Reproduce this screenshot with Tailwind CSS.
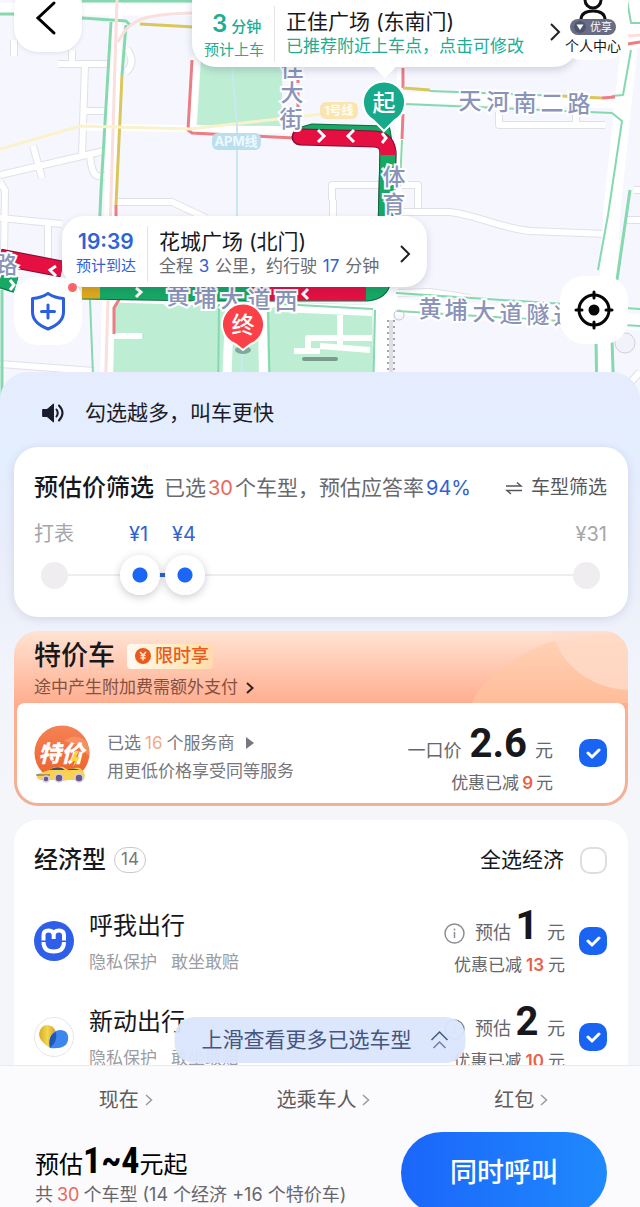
<!DOCTYPE html>
<html lang="zh-CN">
<head>
<meta charset="utf-8">
<meta name="viewport" content="width=device-width, initial-scale=1">
<title>同时呼叫</title>
<script src="https://cdn.jsdelivr.net/npm/@tailwindcss/browser@4"></script>
</head>
<body class="bg-[#f3f5f9] font-['Inter','Noto_Sans_CJK_SC',sans-serif] text-[#17181c]">
<div class="flex h-screen flex-col overflow-hidden">

  <!-- Map -->
  <section class="relative h-[400px] shrink-0 overflow-hidden bg-[#f6f7fe]" aria-label="地图">
    <svg class="absolute inset-0 h-full w-full" viewBox="0 0 640 400" preserveAspectRatio="xMidYMid slice" fill="none">
      <!-- parks -->
      <path d="M201 60H283L281 128L197 125Z" fill="#bdeed3"/>
      <path d="M113 303L125 296L372 305L374 400H113Z" fill="#bdeed3"/>
      <!-- minor roads: outline, then fill -->
      <g stroke="#e0e0e8" stroke-width="8" stroke-linejoin="round">
        <path d="M14 40V56M72 50V64M58 64H108M85 64L82 156M85 111H108M0 175L82 156L104 151M33 146L42 178M90 156C92 176 96 178 106 176M0 182L6 192"/>
        <path d="M127 49C133 58 133 66 126 72M118 202H172L206 218M0 218L62 224M5 190L4 258M48 224V262M0 364L94 371"/>
        <path d="M499 112V125H605M576 110V124M332 200V185H418V208M333 200V218M400 212H450C480 216 500 228 530 231L606 234M634 190H640M625 220H640"/>
        <path d="M395 293L430 292L470 298M630 383L640 372"/>
      </g>
      <g stroke="#fff" stroke-width="6" stroke-linejoin="round">
        <path d="M14 40V56M72 50V64M58 64H108M85 64L82 156M85 111H108M0 175L82 156L104 151M33 146L42 178M90 156C92 176 96 178 106 176M0 182L6 192"/>
        <path d="M127 49C133 58 133 66 126 72M118 202H172L206 218M0 218L62 224M5 190L4 258M48 224V262M0 364L94 371"/>
        <path d="M499 112V125H605M576 110V124M332 200V185H418V208M333 200V218M400 212H450C480 216 500 228 530 231L606 234M634 190H640M625 220H640"/>
        <path d="M395 293L430 292L470 298M630 383L640 372"/>
      </g>
      <!-- major roads -->
      <g stroke="#fff" stroke-linejoin="round">
        <path d="M0 9L220 10" stroke-width="12"/>
        <path d="M116 0L106 400" stroke-width="13"/>
        <path d="M400 97L620 103" stroke-width="11"/>
        <path d="M80 127L300 130" stroke-width="7"/>
        <path d="M634 0L612 210L602 400" stroke-width="17"/>
        <path d="M620 38H640" stroke-width="20"/>
        <path d="M385 306L640 322" stroke-width="16"/>
        <path d="M386 290L380 400" stroke-width="17"/>
        <path d="M402 60L393 300M196 55L191 130" stroke-width="9"/>
        <path d="M230 300L226 400M262 300L264 400" stroke-width="9"/>
        <path d="M113 336H142M294 351H320M308 350V338H372M340 315V346M320 346L370 350M280 309L372 313" stroke-width="6"/>
        <path d="M113 300L384 308" stroke-width="5"/>
      </g>
      <!-- traffic lines -->
      <g stroke="#86d9ae" stroke-width="3" stroke-linejoin="round">
        <path d="M0 14H14M82 1H200M82 18L126 21L130 25M111 22L101 190L98 260M126 25L122 75M2 290V400"/>
        <path d="M430 91L560 96M405 104L612 113L622 121L608 215L598 270M631 50L623 95L612 96M627 0L631 23H640" stroke-width="2"/>
        <path d="M402 140L400 186M396 293L640 309M397 311L640 326M375 310L373 400M279 304L373 309M219 304L218 400M268 304L270 400M90 300L94 400" stroke-width="2"/>
        <path d="M630 190L617 280M596 340L597 400M612 340L614 400" stroke-width="3"/>
      </g>
      <path d="M192 60L188 130L192 133L294 138M403 68V88M403 114L402 139M602 98L615 97M628 44L640 42M116 205V220M120 298L114 308V334" stroke="#ed7d84" stroke-width="3"/>
      <path d="M298 74V110" stroke="#ed7d84" stroke-width="3" stroke-dasharray="9 5"/>
      <path d="M122 75L116 205M140 24L194 27M403 88L430 90M560 96L602 98" stroke="#d9c75c" stroke-width="3"/>
      <path d="M117 0L116 30L105 400M118 42C130 20 140 14 194 13M628 36L640 35" stroke="#fbdfdc" stroke-width="3"/>
      <path d="M0 149L80 126L190 129L330 113" stroke="#faf2cb" stroke-width="3"/>
      <path d="M232 68L237 125V216M242 348L241 400" stroke="#c9e9f2" stroke-width="2"/>
      <path d="M388 320V400M394 320V400" stroke="#a3a4ac" stroke-width="2" stroke-dasharray="2 4"/>
      <path d="M391 320V400" stroke="#dedfe4" stroke-width="4"/>
      <circle cx="399" cy="315" r="5" stroke="#c3c5cd"/>
      <circle cx="625" cy="343" r="10" stroke="#cfd0da" fill="#f2f3fa"/>

      <!-- transit labels -->
      <rect x="212" y="133" width="49" height="17" rx="6" fill="#bcdfee"/>
      <text x="236" y="146" text-anchor="middle" font-size="13" font-weight="700" fill="#eef9ff">APM线</text>
      <rect x="320" y="102" width="38" height="17" rx="6" fill="#fae5b0"/>
      <text x="339" y="115" text-anchor="middle" font-size="12" font-weight="700" fill="#fffdf4">1号线</text>

      <!-- planned route -->
      <g stroke-linejoin="round">
        <path d="M298 132L312 128L386 130L388 142" stroke="#0b6b41" stroke-width="9" stroke-linecap="round"/>
        <path d="M298 132L312 128L386 130L388 142" stroke="#17a864" stroke-width="7" stroke-linecap="round"/>
        <path d="M300 137L375 139Q388 140 388 154L386 230" stroke="#7c0f35" stroke-width="17" stroke-linecap="round"/>
        <path d="M388 150L386 230" stroke="#0b6b41" stroke-width="17"/>
        <path d="M388 150L386 230" stroke="#17a864" stroke-width="15"/>
        <path d="M300 137L375 139Q388 140 388 155" stroke="#e50f41" stroke-width="15"/>
        <circle cx="300" cy="137" r="7" fill="#e50f41"/>
        <path d="M0 257L62 269" stroke="#7c0f35" stroke-width="17"/>
        <path d="M0 257L62 269" stroke="#e50f41" stroke-width="15"/>
        <path d="M0 280L16 285" stroke="#0b6b41" stroke-width="16"/>
        <path d="M0 280L16 285" stroke="#17a864" stroke-width="14"/>
        <path d="M82 291L200 293L366 293Q381 292 383 280" stroke="#0b6b41" stroke-width="17"/>
        <path d="M82 291L200 293L366 293Q381 292 383 280" stroke="#17a864" stroke-width="15"/>
        <path d="M82 291L100 291" stroke="#e0a91c" stroke-width="15"/>
        <path d="M250 293H366" stroke="#e50f41" stroke-width="15"/>
      </g>
      <path d="M318 130L324 136L318 142M354 130L348 136L354 142M382 133L386 138L382 143M56 266L50 270L56 276M10 280L14 285L10 290M136 288L141 292L136 297M308 289L303 294L308 299M382 168L387 173" stroke="#fff" stroke-width="3"/>

      <!-- road names -->
      <g font-size="23" fill="#8a94b8" stroke="#fff" stroke-width="4" paint-order="stroke" font-weight="500" text-anchor="middle">
        <text x="292" y="76">佳</text><text x="292" y="101">大</text><text x="291" y="127">街</text>
        <text x="394" y="185">体</text><text x="394" y="212">育</text>
        <text x="470" y="109">天</text><text x="498" y="110">河</text><text x="525" y="111">南</text><text x="552" y="111">二</text><text x="579" y="112">路</text>
        <text x="6" y="273">路</text>
        <text x="178" y="304">黄</text><text x="205" y="306">埔</text><text x="232" y="307">大</text><text x="259" y="308">道</text><text x="286" y="309">西</text>
        <text x="430" y="317">黄</text><text x="456" y="318">埔</text><text x="484" y="320">大</text><text x="511" y="322">道</text><text x="538" y="323">隧</text><text x="565" y="324">道</text>
      </g>

      <!-- start and end pins -->
      <path d="M384 131L374 121A21 21 0 1 1 394 121Z" fill="#16a98b" stroke="#fff" stroke-width="2"/>
      <text x="384" y="111" text-anchor="middle" font-size="23" font-weight="500" fill="#fff">起</text>
      <ellipse cx="243" cy="350" rx="8" ry="4" fill="#83a79a"/>
      <path d="M243 350L235 344A21 21 0 1 1 251 344Z" fill="#fa4148" stroke="#fff" stroke-width="2"/>
      <text x="243" y="333" text-anchor="middle" font-size="23" font-weight="500" fill="#fff">终</text>
    </svg>

    <!-- pick-up card -->
    <button type="button" class="absolute left-[192px] top-[-4px] flex h-[71px] w-[386px] items-center rounded-b-3xl bg-white pl-3 pt-1 text-left shadow-[0_3px_8px_rgba(40,50,90,0.2)]">
      <span class="w-[70px] text-[#20ad92]">
        <span class="flex items-baseline gap-1 pl-2 leading-6"><span class="text-2xl font-semibold">3</span><span class="text-[15px] font-medium">分钟</span></span>
        <span class="block text-[15px] leading-5">预计上车</span>
      </span>
      <span class="h-14 w-px bg-[#e3e3e8]"></span>
      <span class="ml-[11px]">
        <span class="block text-[21px] leading-6">正佳广场 (东南门)</span>
        <span class="block text-[17px] leading-6 text-[#20ad92]">已推荐附近上车点，点击可修改</span>
      </span>
    </button>
    <span class="absolute left-[373px] top-[66px] h-3 w-6 bg-white [clip-path:polygon(0_0,100%_0,50%_100%)]"></span>

    <button type="button" aria-label="返回" class="absolute left-[14px] top-[-16px] flex h-[68px] w-[68px] items-center justify-center rounded-3xl bg-white shadow-[0_1px_4px_rgba(40,50,90,0.12)]">
      <svg class="h-9 w-9" viewBox="0 0 36 36" fill="none" stroke="#000" stroke-width="3" stroke-linecap="round"><path d="M24 3L8 18L24 33"/></svg>
    </button>

    <button type="button" class="absolute right-[12px] top-[-8px] flex h-[68px] w-[70px] flex-col items-center justify-end rounded-b-3xl bg-white pb-1">
      <svg class="absolute top-0 h-9 w-[34px]" viewBox="0 0 34 36" fill="none" stroke="#0d0e12" stroke-width="3"><circle cx="17" cy="8" r="8"/><path d="M5 28Q5 19 17 19T29 28"/></svg>
      <span class="relative mb-px flex h-4 items-center gap-1 rounded-full bg-[#686c84] px-1 text-[11px] leading-none text-white">
        <svg class="h-3 w-3" viewBox="0 0 12 12"><circle cx="6" cy="6" r="6" fill="#4f5571"/><path d="M2.500 3.500H9.500L6 9Z" fill="#fff"/></svg>优享
      </span>
      <span class="text-[14px] leading-5">个人中心</span>
    </button>
    <svg class="absolute left-[549px] top-[22px] h-5 w-3" viewBox="0 0 12 20" fill="none" stroke="#222" stroke-width="2"><path d="M2 2L10 10L2 18"/></svg>

    <!-- destination card -->
    <button type="button" class="absolute left-[62px] top-[216px] flex h-[71px] w-[365px] items-center rounded-[22px] bg-white pl-[14px] pt-1 text-left shadow-[0_3px_8px_rgba(40,50,90,0.18)]">
      <span class="w-[71px] text-[#2f62d6]">
        <span class="block pl-0.5 text-[21px] font-semibold leading-6">19:39</span>
        <span class="block text-[15px] leading-6">预计到达</span>
      </span>
      <span class="h-14 w-px bg-[#e3e3e8]"></span>
      <span class="ml-[11px]">
        <span class="block text-[21px] leading-6">花城广场 (北门)</span>
        <span class="block text-[17px] leading-6 text-[#6a6c72]">全程 <span class="mx-px text-[#2f62d6]">3</span> 公里，约行驶 <span class="mx-px text-[#2f62d6]">17</span> 分钟</span>
      </span>
      <svg class="ml-auto mr-4 h-5 w-3" viewBox="0 0 12 20" fill="none" stroke="#222" stroke-width="2"><path d="M2 2L10 10L2 18"/></svg>
    </button>

    <button type="button" aria-label="安全中心" class="absolute left-[14px] top-[277px] flex h-[68px] w-[68px] items-center justify-center rounded-3xl bg-white">
      <svg class="h-10 w-9" viewBox="0 0 36 40" fill="none" stroke="#2c5fe0" stroke-width="3" stroke-linejoin="round" stroke-linecap="round"><path d="M18 2.500Q25 7 33.500 7.500V21Q33.500 32 18 38Q2.500 32 2.500 21V7.500Q11 7 18 2.500ZM18 14V27M11.500 20.500H24.500"/></svg>
    </button>
    <span class="absolute left-[68px] top-[283px] h-[9px] w-[9px] rounded-full bg-[#fa6566]"></span>
    <button type="button" aria-label="定位" class="absolute right-[12px] top-[276px] flex h-[68px] w-[68px] items-center justify-center rounded-3xl bg-white">
      <svg class="h-10 w-10" viewBox="0 0 40 40" fill="none" stroke="#050505" stroke-width="3" stroke-linecap="round"><circle cx="20" cy="20" r="15"/><circle cx="20" cy="20" r="5.500" fill="#050505" stroke="none"/><path d="M20 2V8M20 32V38M2 20H8M32 20H38"/></svg>
    </button>
    <span class="absolute left-1/2 top-[357px] h-1 w-9 -translate-x-1/2 rounded-full bg-[#3c4a44]/50"></span>
  </section>

  <!-- Sheet -->
  <main class="relative -mt-7 flex min-h-0 flex-1 flex-col gap-[14px] overflow-hidden rounded-t-[28px] bg-[linear-gradient(180deg,#e6ecfd_0px,#e3eefe_75px,#e9edfb_170px,#f1f4fa_300px,#f4f6fa_420px)] pl-[14px] pr-3">
    <div class="flex h-[61px] shrink-0 items-end gap-5 pl-[27px]">
      <svg class="mb-2 h-6 w-6" viewBox="0 0 24 24" fill="none" stroke="#1a1c2a" stroke-width="2" stroke-linecap="round"><path d="M2 8.500H6L12.500 3V21L6 15.500H2Z" fill="#1a1c2a" stroke-width="1" stroke-linejoin="round"/><path d="M15.500 8.500Q18 12 15.500 15.500M18 4.500Q25 12 18 19.500"/></svg>
      <p class="mb-1 text-[21px] leading-8 text-[#1a1c2a]">勾选越多，叫车更快</p>
    </div>

    <section class="shrink-0 rounded-3xl bg-white pb-[22px] pl-5 pr-[21px] pt-[25px] shadow-[0_2px_10px_rgba(90,100,150,0.18)]">
      <div class="flex h-8 items-center whitespace-nowrap">
        <h2 class="text-2xl font-medium leading-8">预估价筛选</h2>
        <p class="ml-[10px] text-[21px] leading-8 text-[#68696f]">已选<span class="mx-0.5 text-[20px] text-[#e8685a]">30</span>个车型，预估应答率<span class="ml-0.5 text-[20px] text-[#3262cf]">94%</span></p>
        <button type="button" class="ml-auto flex items-center gap-2 text-[19px] text-[#55565b]">
          <svg class="h-4 w-[18px]" viewBox="0 0 18 16" fill="none" stroke="#55565b" stroke-width="1.500"><path d="M1 6H16L12 2.500M17 10.500H2L6 14"/></svg>车型筛选
        </button>
      </div>
      <div class="mt-[18px] flex h-6 items-center text-[20px] text-[#a6a6aa]">
        <span class="w-[95px]">打表</span>
        <label for="price-min" class="w-[43px] text-[#3262cf]">¥1</label>
        <label for="price-max" class="text-[#3262cf]">¥4</label>
        <span class="ml-auto">¥31</span>
      </div>
      <div class="relative mt-[9px] flex h-10 items-center justify-between px-[7px]">
        <span class="h-[27px] w-[27px] rounded-full bg-[#efedef]"></span>
        <span class="h-0.5 flex-1 bg-[#efedef]"></span>
        <span class="h-[27px] w-[27px] rounded-full bg-[#efedef]"></span>
        <span class="absolute left-[105px] h-1 w-12 bg-[#2a62dc]"></span>
        <input id="price-min" type="range" min="0" max="100" step="0.1" value="16.2" class="pointer-events-none absolute inset-0 h-10 w-full appearance-none bg-transparent [&::-webkit-slider-thumb]:pointer-events-auto [&::-webkit-slider-thumb]:h-10 [&::-webkit-slider-thumb]:w-10 [&::-webkit-slider-thumb]:appearance-none [&::-webkit-slider-thumb]:rounded-full [&::-webkit-slider-thumb]:bg-[radial-gradient(circle,#1b66f5_7px,#fff_8px)] [&::-webkit-slider-thumb]:shadow-[0_2px_8px_rgba(60,60,80,0.28)]">
        <input id="price-max" type="range" min="0" max="100" step="0.1" value="24.5" class="pointer-events-none absolute inset-0 h-10 w-full appearance-none bg-transparent [&::-webkit-slider-thumb]:pointer-events-auto [&::-webkit-slider-thumb]:h-10 [&::-webkit-slider-thumb]:w-10 [&::-webkit-slider-thumb]:appearance-none [&::-webkit-slider-thumb]:rounded-full [&::-webkit-slider-thumb]:bg-[radial-gradient(circle,#1b66f5_7px,#fff_8px)] [&::-webkit-slider-thumb]:shadow-[0_2px_8px_rgba(60,60,80,0.28)]">
      </div>
    </section>

    <section class="relative shrink-0 overflow-hidden rounded-3xl bg-[linear-gradient(180deg,#ffe3d3_0px,#ffae90_72px,#f2b096_100%)]">
      <svg class="absolute right-0 top-0 h-[72px] w-[160px]" viewBox="0 0 160 72"><path d="M4 72C12 50 50 22 85 10L160 0V72Z" fill="#ffc9a2" fill-opacity=".55"/><path d="M84 0C92 35 125 58 160 59V0Z" fill="#ffdccb" fill-opacity=".75"/></svg>
      <div class="relative pb-[3px] pl-5 pt-[9px]">
        <div class="flex h-8 items-center gap-3">
          <h2 class="text-[27px] font-medium leading-8">特价车</h2>
          <span class="flex h-[25px] items-center gap-1 rounded bg-[linear-gradient(90deg,#fffaf2,#ffe4ae_80%,#ffd9b0)] pl-2 pr-1 text-[18px] font-medium leading-6 text-[#ea5a1e]">
            <svg class="h-4 w-4" viewBox="0 0 16 16"><circle cx="8" cy="8" r="8" fill="#ea5a1e"/><path d="M5 4L8 7L11 4M8 7V12.500M5.500 7.500H10.500M5.500 10H10.500" fill="none" stroke="#ffe9cf" stroke-width="1.500"/></svg>限时享
          </span>
        </div>
        <a href="#fees" class="mt-1 flex h-6 items-center gap-2 text-[17px] text-[#86503f]">途中产生附加费需额外支付
          <svg class="h-3 w-2" viewBox="0 0 8 12" fill="none" stroke="#33211c" stroke-width="2"><path d="M1 1L6.500 6L1 11"/></svg>
        </a>
      </div>
      <div class="relative mx-[3px] mb-[3px] flex h-[100px] items-center rounded-b-[21px] rounded-t-lg bg-white pl-[17px] pr-[18px]">
        <svg class="h-[60px] w-[56px]" viewBox="0 0 56 60">
          <defs><linearGradient id="deal" x1="0" y1="0" x2="0" y2="1"><stop stop-color="#f58255"/><stop offset="1" stop-color="#ee6029"/></linearGradient></defs>
          <circle cx="28" cy="30" r="27.500" fill="url(#deal)"/>
          <path d="M30 18Q40 10 51 17Q56 24 55 33L44 22Z" fill="#f9a07a" opacity=".6"/>
          <text x="27" y="39" text-anchor="middle" font-size="23" font-weight="900" font-style="italic" fill="#fff">特价</text>
          <path d="M41 28L37 38H41L39 44L46 34H42L45 28Z" fill="#fcd638"/>
          <path d="M3 51Q10 49 15 47Q20 43 29 44L34 47Q39 44 46 45L50 49Q52 55 49 57H6L3 55Z" fill="#f8d155"/>
          <path d="M15 47Q21 43 28 45L31 47ZM33 47Q39 44 46 47Z" fill="#405065"/>
          <path d="M2 52H16" stroke="#665b58" stroke-width="1"/>
          <g fill="#675988" stroke="#d7ccec" stroke-width="1.500"><circle cx="12" cy="56" r="3"/><circle cx="25" cy="55" r="4"/><circle cx="45" cy="55" r="4"/></g>
        </svg>
        <div class="ml-[17px] pt-[7px] text-[17px] leading-7 text-[#77787d]">
          <button type="button" class="flex items-center leading-7">已选<span class="mx-1 text-[#f0a98b]">16</span>个服务商<svg class="ml-3 h-3 w-2" viewBox="0 0 8 12"><path d="M0 0L8 6L0 12Z" fill="#77787d"/></svg></button>
          <p>用更低价格享受同等服务</p>
        </div>
        <div class="ml-auto flex flex-col items-end pt-3 text-[#66676c]">
          <p class="flex items-baseline text-[18px] leading-10">一口价<span class="mx-2 font-['Roboto'] text-[40px] font-bold text-[#17181c]">2.6</span>元</p>
          <p class="text-[17px] leading-6">优惠已减<span class="mx-[3px] font-semibold text-[#ea6148]">9</span>元</p>
        </div>
        <label class="ml-[26px] grid place-items-center">
          <input type="checkbox" checked aria-label="选择特价车" class="col-start-1 row-start-1 h-7 w-7 appearance-none rounded-[10px] border-2 border-[#dedee2] bg-white checked:border-[#1a64f4] checked:bg-[#1a64f4]">
          <svg class="pointer-events-none col-start-1 row-start-1 h-4 w-4" viewBox="0 0 16 16" fill="none" stroke="#fff" stroke-width="3" stroke-linecap="round" stroke-linejoin="round"><path d="M3 8L7 12L14 5"/></svg>
        </label>
      </div>
    </section>

    <section class="shrink-0 rounded-t-3xl bg-white pl-5 pr-[21px] pt-6">
      <div class="flex h-8 items-center">
        <h2 class="text-2xl font-medium leading-8">经济型</h2>
        <span class="ml-2 flex h-[26px] items-center rounded-full border border-[#c9c9cd] px-1.5 text-[17px] text-[#77787d]">14</span>
        <label for="all-economy" class="ml-auto text-[21px]">全选经济</label>
        <input id="all-economy" type="checkbox" class="ml-4 h-[27px] w-[27px] appearance-none rounded-[10px] border-2 border-[#dedee2] bg-white checked:bg-[#1a64f4]">
      </div>
      <ul class="mt-[17px]">
        <li class="flex h-24 items-center">
          <svg class="h-10 w-10" viewBox="0 0 40 40" fill="none"><circle cx="20" cy="20" r="20" fill="#2f5fe8"/><path d="M9.500 19.500V14Q9.500 9.500 14.500 9.500Q19.700 9.500 19.700 14V18V14Q19.700 9.500 25 9.500Q30 9.500 30 14V19.500" stroke="#fff" stroke-width="4"/><path d="M9.500 21Q9.500 30.500 19.700 30.500Q30 30.500 30 21" stroke="#fff" stroke-width="4"/></svg>
          <div class="ml-[15px] pt-1.5">
            <h3 class="text-2xl leading-9">呼我出行</h3>
            <p class="flex gap-[14px] text-[17px] leading-9 text-[#9c9da2]"><span>隐私保护</span><span>敢坐敢赔</span></p>
          </div>
          <div class="ml-auto flex flex-col items-end text-[#66676c]">
            <p class="flex items-baseline text-[18px] leading-10"><svg class="mr-[10px] mt-2 h-[21px] w-[21px] self-center" viewBox="0 0 21 21" fill="none" stroke="#8d8e93" stroke-width="1.500"><circle cx="10.500" cy="10.500" r="9.500"/><path d="M10.500 9V15M10.500 5.500V7.500"/></svg>预估<span class="mx-1 w-6 text-center font-['Roboto'] text-[40px] font-bold text-[#17181c]">1</span><span class="ml-1">元</span></p>
            <p class="text-[17px] leading-6">优惠已减<span class="mx-1 font-semibold text-[#ea6148]">13</span>元</p>
          </div>
          <label class="ml-[14px] grid place-items-center">
            <input type="checkbox" checked aria-label="选择呼我出行" class="col-start-1 row-start-1 h-7 w-7 appearance-none rounded-[10px] border-2 border-[#dedee2] bg-white checked:border-[#1a64f4] checked:bg-[#1a64f4]">
            <svg class="pointer-events-none col-start-1 row-start-1 h-4 w-4" viewBox="0 0 16 16" fill="none" stroke="#fff" stroke-width="3" stroke-linecap="round" stroke-linejoin="round"><path d="M3 8L7 12L14 5"/></svg>
          </label>
        </li>
        <li class="flex h-24 items-center">
          <svg class="h-10 w-10" viewBox="0 0 40 40" fill="none"><defs><linearGradient id="gold" x1="0" y1="0" x2="1" y2="0"><stop stop-color="#d9a92b"/><stop offset=".5" stop-color="#f1d84c"/><stop offset="1" stop-color="#d69a2e"/></linearGradient></defs><circle cx="20" cy="20" r="19.500" fill="#fff" stroke="#e6e6ea"/><path d="M16 31Q5 24 5 17Q6 8 14 8Q22 10 22 17Z" fill="url(#gold)"/><path d="M16 31C14 20 18 14 26 13C32 13 35 17 34 23C33 29 28 32 16 31Z" fill="#3d86ee"/><path d="M16 31C14 22 17 17 22 15Q24 24 16 31Z" fill="#2157b9"/></svg>
          <div class="ml-[15px] pt-1.5">
            <h3 class="text-2xl leading-9">新动出行</h3>
            <p class="flex gap-[14px] text-[17px] leading-9 text-[#9c9da2]"><span>隐私保护</span><span>敢坐敢赔</span></p>
          </div>
          <div class="ml-auto flex flex-col items-end text-[#66676c]">
            <p class="flex items-baseline text-[18px] leading-10"><svg class="mr-[10px] mt-2 h-[21px] w-[21px] self-center" viewBox="0 0 21 21" fill="none" stroke="#8d8e93" stroke-width="1.500"><circle cx="10.500" cy="10.500" r="9.500"/><path d="M10.500 9V15M10.500 5.500V7.500"/></svg>预估<span class="mx-1 w-6 text-center font-['Roboto'] text-[40px] font-bold text-[#17181c]">2</span><span class="ml-1">元</span></p>
            <p class="text-[17px] leading-6">优惠已减<span class="mx-1 font-semibold text-[#ea6148]">10</span>元</p>
          </div>
          <label class="ml-[14px] grid place-items-center">
            <input type="checkbox" checked aria-label="选择新动出行" class="col-start-1 row-start-1 h-7 w-7 appearance-none rounded-[10px] border-2 border-[#dedee2] bg-white checked:border-[#1a64f4] checked:bg-[#1a64f4]">
            <svg class="pointer-events-none col-start-1 row-start-1 h-4 w-4" viewBox="0 0 16 16" fill="none" stroke="#fff" stroke-width="3" stroke-linecap="round" stroke-linejoin="round"><path d="M3 8L7 12L14 5"/></svg>
          </label>
        </li>
      </ul>
    </section>

    <button type="button" class="absolute bottom-0.5 left-1/2 flex h-[46px] -translate-x-1/2 items-center gap-[18px] whitespace-nowrap rounded-[20px] bg-[#dae6fd]/95 pl-[27px] pr-4 text-[21px] text-[#45557f]">上滑查看更多已选车型
      <svg class="h-5 w-5" viewBox="0 0 20 20" fill="none" stroke="#45557f" stroke-width="1.500"><path d="M2 10L10 2L18 10"/><path d="M4 18L10 12L16 18" opacity=".7"/></svg>
    </button>
  </main>

  <!-- Booking bar -->
  <footer class="-mb-[7px] shrink-0 border-t border-[#ebebef] bg-[#fbfafc]">
    <nav class="grid h-[66px] grid-cols-3 items-center pl-[27px] pr-5 pt-0.5 text-[20px] text-[#5c5d61]">
      <button type="button" class="flex items-center justify-center gap-1.5">现在<svg class="h-3 w-2" viewBox="0 0 8 12" fill="none" stroke="#9b9b9f" stroke-width="1.500"><path d="M1 1L6.500 6L1 11"/></svg></button>
      <button type="button" class="flex items-center justify-center gap-1.5">选乘车人<svg class="h-3 w-2" viewBox="0 0 8 12" fill="none" stroke="#9b9b9f" stroke-width="1.500"><path d="M1 1L6.500 6L1 11"/></svg></button>
      <button type="button" class="flex items-center justify-center gap-1.5">红包<svg class="h-3 w-2" viewBox="0 0 8 12" fill="none" stroke="#9b9b9f" stroke-width="1.500"><path d="M1 1L6.500 6L1 11"/></svg></button>
    </nav>
    <div class="flex items-start justify-between pl-[35px] pr-[33px]">
      <div class="whitespace-nowrap pt-[9px]">
        <p class="flex h-[42px] items-baseline text-2xl leading-10 text-black">预估<span class="font-['Roboto_Condensed','Roboto'] text-[36px] font-bold">1~4</span>元起</p>
        <p class="text-[18px] leading-6 text-[#66676c]">共<span class="mx-1 text-[#e8685a]">30</span>个车型 (14 个经济 +16 个特价车)</p>
      </div>
      <button type="button" class="h-[82px] w-[206px] rounded-full bg-[linear-gradient(90deg,#1b66fa,#1f89fd)] text-[27px] font-medium text-white">同时呼叫</button>
    </div>
  </footer>
</div>
</body>
</html>
